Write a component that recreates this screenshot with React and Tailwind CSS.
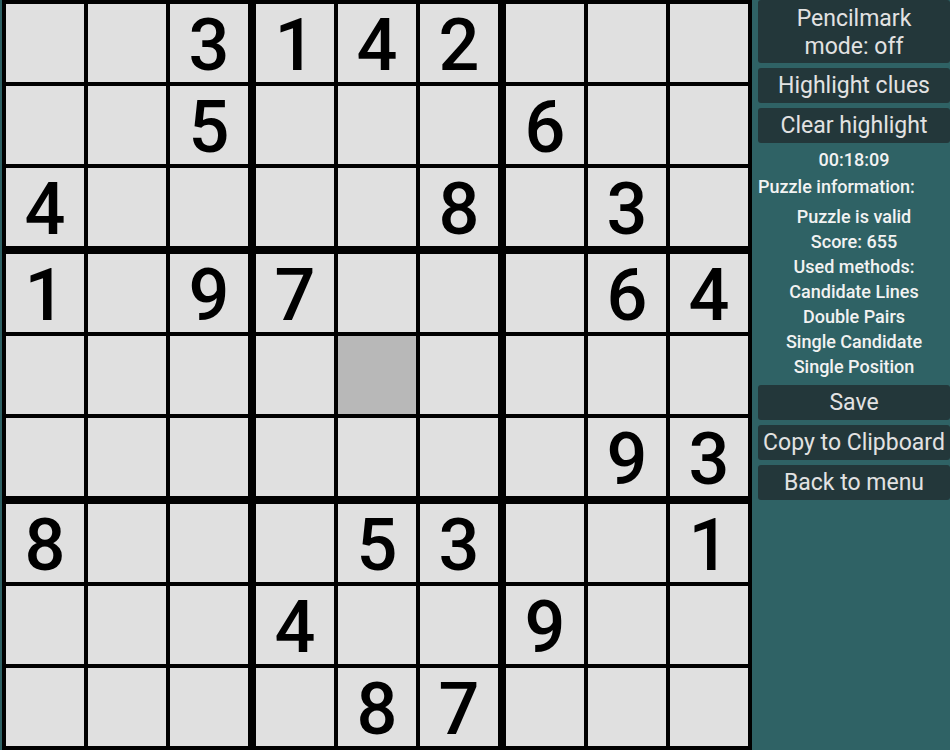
import React from 'react'

const board = [
  [0, 0, 3, 1, 4, 2, 0, 0, 0],
  [0, 0, 5, 0, 0, 0, 6, 0, 0],
  [4, 0, 0, 0, 0, 8, 0, 3, 0],
  [1, 0, 9, 7, 0, 0, 0, 6, 4],
  [0, 0, 0, 0, 0, 0, 0, 0, 0],
  [0, 0, 0, 0, 0, 0, 0, 9, 3],
  [8, 0, 0, 0, 5, 3, 0, 0, 1],
  [0, 0, 0, 4, 0, 0, 9, 0, 0],
  [0, 0, 0, 0, 8, 7, 0, 0, 0],
]

const methods = ['Candidate Lines', 'Double Pairs', 'Single Candidate', 'Single Position']

function Cell({ value, highlighted }) {
  return (
    <div
      className={`w-[78px] h-[78px] flex items-center justify-center pt-[5px] text-[72px] font-medium leading-none text-black ${
        highlighted ? 'bg-[#b8b8b8]' : 'bg-[#e0e0e0]'
      }`}
    >
      {value || ''}
    </div>
  )
}

function Block({ br, bc }) {
  const cells = []
  for (let r = 0; r < 3; r++) {
    for (let c = 0; c < 3; c++) {
      const row = br * 3 + r
      const col = bc * 3 + c
      cells.push(<Cell key={`${r}-${c}`} value={board[row][col]} highlighted={row === 4 && col === 4} />)
    }
  }
  return <div className="grid grid-cols-3 gap-[4px]">{cells}</div>
}

function SideButton({ children, tall }) {
  return (
    <button
      className={`w-full rounded-[3px] bg-[#23373a] text-[#e2e2e2] text-[23px] leading-[28px] text-center ${
        tall ? 'h-[63px] pt-[4px] pb-[2px]' : 'h-[35px] pt-[1px]'
      }`}
    >
      {children}
    </button>
  )
}

export default function App() {
  return (
    <div className="w-[950px] h-[750px] bg-[#2f6265] flex overflow-hidden font-['Roboto',sans-serif]">
      {/* Board */}
      <div className="ml-[2px] w-[750px] h-[750px] bg-black p-[4px] grid grid-cols-3 gap-[8px]">
        {[0, 1, 2].map((br) => [0, 1, 2].map((bc) => <Block key={`${br}-${bc}`} br={br} bc={bc} />))}
      </div>

      {/* Sidebar */}
      <div className="ml-[6px] w-[192px] flex flex-col">
        <SideButton tall>
          Pencilmark
          <br />
          mode: off
        </SideButton>
        <div className="mt-[5px]">
          <SideButton>Highlight clues</SideButton>
        </div>
        <div className="mt-[5px]">
          <SideButton>Clear highlight</SideButton>
        </div>
        <div className="mt-[4px] h-[25px] leading-[25px] text-center text-[18px] font-medium text-[#f2f2f2]">00:18:09</div>
        <div className="mt-[3px] h-[24px] leading-[24px] text-[18px] font-medium text-[#f2f2f2]">Puzzle information:</div>
        <div className="mt-[5px] flex flex-col text-center text-[18px] font-medium leading-[25px] text-[#f2f2f2]">
          <div>Puzzle is valid</div>
          <div>Score: 655</div>
          <div>Used methods:</div>
          {methods.map((m) => (
            <div key={m}>{m}</div>
          ))}
        </div>
        <div className="mt-[6px]">
          <SideButton>Save</SideButton>
        </div>
        <div className="mt-[5px]">
          <SideButton>Copy to Clipboard</SideButton>
        </div>
        <div className="mt-[5px]">
          <SideButton>Back to menu</SideButton>
        </div>
      </div>
    </div>
  )
}
